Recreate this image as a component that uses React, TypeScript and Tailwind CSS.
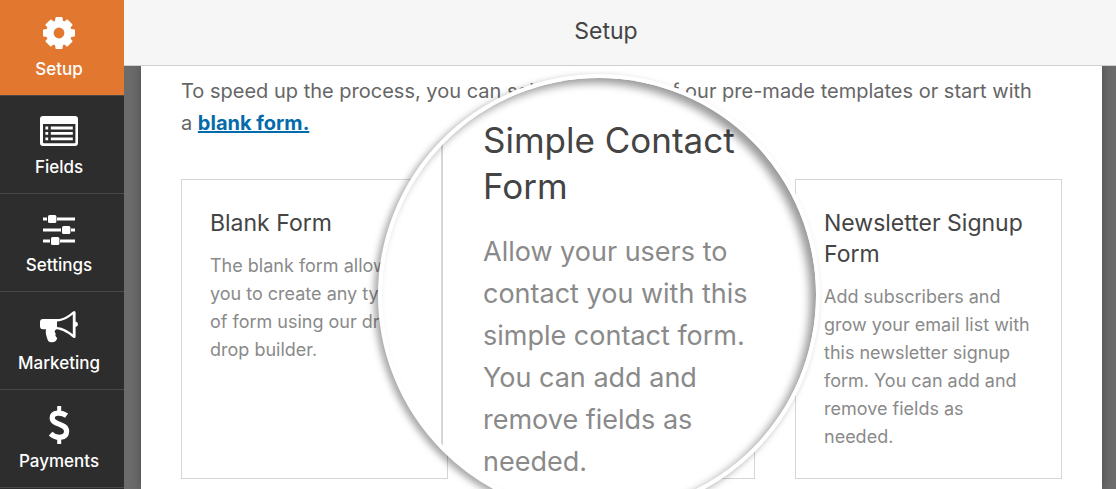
import React from 'react';

// --- Sidebar icons ---
const GearIcon = () => (
  <svg viewBox="0 0 34 34" className="w-[34px] h-[34px]" aria-hidden="true">
    <mask id="gear-hole">
      <rect width="34" height="34" fill="white" />
      <circle cx="17" cy="17" r="5.4" fill="black" />
    </mask>
    <g fill="currentColor" mask="url(#gear-hole)">
      <circle cx="17" cy="17" r="12.8" />
      {[0, 90, 180, 270].map((angle) => (
        <g key={angle}>
          <path
            d="M13.6 1.6Q13.7 1 14.4 1H19.6Q20.3 1 20.4 1.6L21.4 7H12.6Z"
            transform={`rotate(${angle} 17 17)`}
          />
          <path
            d="M13 2Q13.1 1.4 13.8 1.4H20.2Q20.9 1.4 21 2L21.4 7H12.6Z"
            transform={`rotate(${angle + 45} 17 17)`}
          />
        </g>
      ))}
    </g>
  </svg>
);

const FieldsIcon = () => (
  <svg viewBox="0 0 38 30" className="w-[38px] h-[30px]" fill="currentColor" aria-hidden="true">
    <path fillRule="evenodd" d="M3 0H35Q38 0 38 3V27Q38 30 35 30H3Q0 30 0 27V3Q0 0 3 0ZM3 8V26.4Q3 27.2 3.8 27.2H34.6Q35.4 27.2 35.4 26.4V8Z" />
    <path d="M5.4 10.6h2.8v2.8H5.4zM5.4 16h2.8v2.8H5.4zM5.4 21.4h2.8v2.8H5.4zM10.8 10.6h22v2.8h-22zM10.8 16h22v2.8h-22zM10.8 21.4h22v2.8h-22z" />
  </svg>
);

const SettingsIcon = () => (
  <svg viewBox="0 0 34 31" className="w-[34px] h-[31px]" fill="currentColor" aria-hidden="true">
    <path d="M1 3.5h4v3H1zM15 3.5h18v3H15zM1 14.5h18v3H1zM29 14.5h4v3h-4zM1 25.5h7v3H1zM18 25.5h15v3H18z" />
    <rect x="6" y="1" width="8.4" height="8" rx="1.6" />
    <rect x="20" y="12" width="8.4" height="8" rx="1.6" />
    <rect x="9" y="23" width="8.4" height="8" rx="1.6" />
  </svg>
);

const MegaphoneIcon = () => (
  <svg viewBox="0 0 38 34" className="w-[38px] h-[34px]" fill="currentColor" aria-hidden="true">
    <path fillRule="evenodd" d="M17 9C23 9 29 5 33 1.4Q35.4 0 35.6 2.4V11.4Q38 12 38 14.2Q38 16.4 35.6 17V26.4Q35.4 28.8 33 27.4C29 24 23 20 17 19.2C14.4 20 14.2 22 15.8 23.6C14.8 25.4 15.8 27 17.2 28C16.8 31 14 32.8 10.6 32.2Q8.2 32 7.6 29.8C6.4 25.6 5.2 23 6 19.2H3Q0 19.2 0 16.2V12Q0 9 3 9ZM17 11.4V17C23 17.6 28.4 20.6 32.8 24.2V4.4C28.4 8 23 11 17 11.4Z" />
  </svg>
);

const DollarIcon = () => (
  <svg viewBox="0 0 22 38" className="w-[22px] h-[38px]" fill="none" stroke="currentColor" aria-hidden="true">
    <path d="M18.6 9.6C13.5 6 4.2 5.8 4.2 12C4.2 19.2 18.6 17.2 18.6 25.2C18.6 32.4 8.5 33.2 2.6 27.6" strokeWidth="5.2" />
    <path d="M11.2 0V7M11.2 31V38" strokeWidth="4" />
  </svg>
);

const navItems = [
  { label: 'Setup', icon: GearIcon },
  { label: 'Fields', icon: FieldsIcon },
  { label: 'Settings', icon: SettingsIcon },
  { label: 'Marketing', icon: MegaphoneIcon },
  { label: 'Payments', icon: DollarIcon },
];

// --- Builder sidebar ---
const Sidebar = () => (
  <nav className="w-[124px] shrink-0 bg-[#2d2d2d] text-white">
    {navItems.map(({ label, icon: Icon }, index) => (
      <button
        key={label}
        type="button"
        className={`flex flex-col items-center w-full pr-1.5 border-b border-[#484848] ${
          index === 0 ? 'h-24 pt-[13px] bg-[#e27730]' : 'h-[98px] pt-[15px]'
        }`}
      >
        <span className="flex items-center justify-center h-10">
          <Icon />
        </span>
        <span className="mt-1 text-[17px] leading-6 font-medium">{label}</span>
      </button>
    ))}
  </nav>
);

const TemplateCard = ({ title, children }: { title: string; children: React.ReactNode }) => (
  <article className="h-[300px] border border-[#d6d6d6] pl-7 pr-5 pt-7">
    <h2 className="text-[23px] leading-[31px] text-[#444]">{title}</h2>
    <p className="mt-[13px] text-[18px] leading-7 text-[#8a8a8a]">{children}</p>
  </article>
);

// Magnifying lens that lies over the highlighted template
const Magnifier = () => (
  <div className="absolute -left-[111px] -top-[106px] w-[442px] h-[442px] rounded-full border-4 border-white bg-white overflow-hidden shadow-[-4px_3px_7px_rgba(0,0,0,0.35)]">
    <div className="ml-[59px] h-full border-l-2 border-[#d6d6d6] pl-10 pt-[39px]">
      <h2 className="w-[270px] text-[35px] leading-[46px] text-[#444]">Simple Contact Form</h2>
      <p className="mt-[22px] w-[280px] text-[27px] leading-[42px] text-[#8a8a8a]">
        Allow your users to contact you with this simple contact form. You can add and remove fields as needed.
      </p>
    </div>
    <div className="absolute inset-0 rounded-full shadow-[inset_-6px_5px_8px_rgba(0,0,0,0.4)]" />
  </div>
);

const App = () => (
  <div className="flex h-screen overflow-hidden bg-[#6b6b6b] font-['Inter',sans-serif]">
    <Sidebar />
    <div className="flex flex-col flex-1 min-w-0">
      <header className="relative z-10 flex items-center justify-center h-[66px] shrink-0 pb-1 pr-7 bg-[#f6f6f6] border-b border-[#cfcfcf]">
        <h1 className="text-[23px] leading-8 text-[#444]">Setup</h1>
      </header>
      <main className="flex-1 min-h-0 ml-[17px] mr-[14px] px-10 pt-[9px] bg-white shadow-[0_0_10px_rgba(0,0,0,0.3)]">
        <p className="text-[20px] leading-8 text-[#666]">
          To speed up the process, you can select from one of our pre-made templates or start with
          <br />a{' '}
          <a href="#blank" className="font-bold text-[#036aab] underline">blank form.</a>
        </p>
        <div className="grid grid-cols-3 gap-10 mt-10">
          <TemplateCard title="Blank Form">
            The blank form allows you to create any type <br />of form using our drag & drop builder.
          </TemplateCard>
          <article className="relative z-10 border border-[#d6d6d6]">
            <Magnifier />
          </article>
          <TemplateCard title="Newsletter Signup Form">
            Add subscribers and grow your email list with this newsletter signup form. You can add and
            remove fields as <br />needed.
          </TemplateCard>
        </div>
      </main>
    </div>
  </div>
);

export default App;
